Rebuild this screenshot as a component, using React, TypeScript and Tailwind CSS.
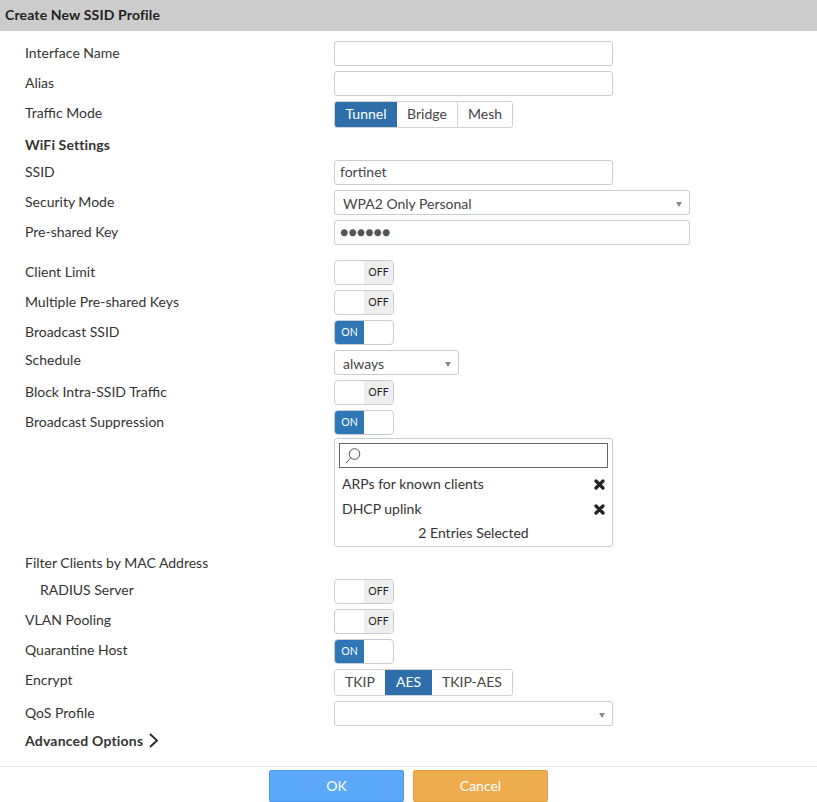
import React from "react";

const Label = ({ children, cls = "" }: { children: React.ReactNode; cls?: string }) => (
  <div className={`w-[334px] shrink-0 pl-[25px] text-[14px] text-[#333] ${cls}`}>{children}</div>
);

const Input = ({ value = "", w = "w-[279px]", cls = "text-[#444]" }: { value?: string; w?: string; cls?: string }) => (
  <div className={`${w} h-[25px] rounded-[3px] border border-[#c8ccd0] bg-white px-[5px] text-[14px] leading-[21px] ${cls}`}>{value}</div>
);

const Caret = () => (
  <svg width="6" height="5" viewBox="0 0 6 5" className="mt-[4px] shrink-0"><path d="M0 0H6L3 5Z" fill="#888" /></svg>
);

const Select = ({ value = "", w }: { value?: string; w: string }) => (
  <div className={`${w} flex h-[25px] items-center justify-between rounded-[3px] border border-[#c8ccd0] bg-white pl-[8px] pr-[7px] text-[14px] text-[#444]`}>
    <span className="pt-[2px]">{value}</span>
    <Caret />
  </div>
);

const Toggle = ({ on }: { on: boolean }) => (
  <div className="flex h-[25px] w-[60px] overflow-hidden rounded-[4px] border border-[#c8ccd0] bg-white text-[10.5px] leading-[23px]">
    {on ? (
      <>
        <div className="w-[29px] bg-[#2e76b6] text-center text-white">ON</div>
        <div className="flex-1" />
      </>
    ) : (
      <>
        <div className="flex-1" />
        <div className="w-[29px] bg-[#eeeeee] text-center text-[#222]">OFF</div>
      </>
    )}
  </div>
);

const Seg = ({ items, active }: { items: { t: string; w: string }[]; active: string }) => (
  <div className="flex h-[27px] overflow-hidden rounded-[3px] border border-[#d0d3d6] text-[14px] leading-[24px]">
    {items.map((it, i) => (
      <div
        key={it.t}
        className={`${it.w} text-center ${it.t === active ? "bg-[#2e6fab] text-white" : "bg-white text-[#444]"} ${i > 0 && it.t !== active && items[i - 1].t !== active ? "border-l border-[#d0d3d6]" : ""}`}
      >
        {it.t}
      </div>
    ))}
  </div>
);

const Row = ({ label, children, cls = "", labelCls = "leading-[24px]" }: { label: React.ReactNode; children?: React.ReactNode; cls?: string; labelCls?: string }) => (
  <div className={`flex ${cls}`}>
    <Label cls={labelCls}>{label}</Label>
    {children}
  </div>
);

const Cross = () => (
  <svg width="11" height="11" viewBox="0 0 11 11" className="mt-[2px]"><path d="M2 2L9 9M9 2L2 9" stroke="#222" strokeWidth="3.2" strokeLinecap="round" /></svg>
);

export default function App() {
  return (
    <div className="flex h-[802px] w-[817px] flex-col overflow-hidden bg-white font-['Lato','Carlito',sans-serif]">
      <div className="h-[31px] bg-[#cccccc] pl-[5px] text-[14px] font-bold leading-[30px] tracking-[0.15px] text-[#222]">Create New SSID Profile</div>
      <div className="flex flex-1 flex-col pt-[10px]">
        <Row label="Interface Name" cls="mb-[5px]"><Input /></Row>
        <Row label="Alias" cls="mb-[5px]"><Input /></Row>
        <Row label="Traffic Mode" cls="mb-[5px]">
          <Seg active="Tunnel" items={[{ t: "Tunnel", w: "w-[62px]" }, { t: "Bridge", w: "w-[60px]" }, { t: "Mesh", w: "w-[55px]" }]} />
        </Row>
        <div className="h-[27px] pl-[25px] text-[14px] font-bold leading-[24px] tracking-[0.13px] text-[#333]">WiFi Settings</div>
        <Row label="SSID" cls="mb-[5px]"><Input value="fortinet" /></Row>
        <Row label="Security Mode" cls="mb-[5px]"><Select value="WPA2 Only Personal" w="w-[356px]" /></Row>
        <Row label="Pre-shared Key" cls="mb-[15px]"><Input value="●●●●●●" w="w-[356px]" cls="text-[#555]" /></Row>
        <Row label="Client Limit" cls="mb-[5px]"><Toggle on={false} /></Row>
        <Row label="Multiple Pre-shared Keys" cls="mb-[5px]"><Toggle on={false} /></Row>
        <Row label="Broadcast SSID" cls="mb-[5px]"><Toggle on /></Row>
        <Row label="Schedule" cls="mb-[5px]" labelCls="leading-[20px]"><Select value="always" w="w-[125px]" /></Row>
        <Row label="Block Intra-SSID Traffic" cls="mb-[5px]"><Toggle on={false} /></Row>
        <Row label="Broadcast Suppression" cls="mb-[3px]"><Toggle on /></Row>
        <Row label="" cls="mb-[4px]">
          <div className="flex h-[109px] w-[279px] flex-col rounded-[3px] border border-[#c8ccd0] px-[4px] pt-[4px] text-[14px] text-[#333]">
            <div className="flex h-[25px] items-center border border-[#666] pl-[5px]">
              <svg width="16" height="16" viewBox="0 0 16 16" fill="none" stroke="#555" strokeWidth="1"><circle cx="9.5" cy="6" r="5.3" /><path d="M5.8 9.8L1 15" /></svg>
            </div>
            <div className="mt-[3px] flex h-[25px] items-center justify-between pl-[3px] pr-[3px]"><span>ARPs for known clients</span><Cross /></div>
            <div className="flex h-[25px] items-center justify-between pl-[3px] pr-[3px]"><span>DHCP uplink</span><Cross /></div>
            <div className="h-[24px] text-center leading-[24px]">2 Entries Selected</div>
          </div>
        </Row>
        <Row label="Filter Clients by MAC Address" cls="h-[28px]" />
        <Row label={<span className="pl-[15px]">RADIUS Server</span>} cls="mb-[5px]" labelCls="leading-[22px]"><Toggle on={false} /></Row>
        <Row label="VLAN Pooling" cls="mb-[5px]" labelCls="leading-[22px]"><Toggle on={false} /></Row>
        <Row label="Quarantine Host" cls="mb-[5px]" labelCls="leading-[22px]"><Toggle on /></Row>
        <Row label="Encrypt" cls="mb-[5px]" labelCls="leading-[22px]">
          <Seg active="AES" items={[{ t: "TKIP", w: "w-[50px]" }, { t: "AES", w: "w-[47px]" }, { t: "TKIP-AES", w: "w-[80px]" }]} />
        </Row>
        <Row label="QoS Profile" cls="mb-[3px]"><Select w="w-[279px]" /></Row>
        <div className="flex h-[23px] items-center pl-[25px] text-[14px] font-bold tracking-[0.2px] text-[#333]">
          Advanced Options
          <svg width="11" height="15" viewBox="0 0 11 15" fill="none" stroke="#222" strokeWidth="1.8" className="ml-[5px]"><path d="M2 1L9 7.5L2 14" /></svg>
        </div>
      </div>
      <div className="flex h-[36px] justify-center gap-[9px] border-t border-[#e8e8e8] pt-[3px]">
        <div className="h-[32px] w-[135px] rounded-[2px] border border-[#4a9aef] bg-[#5ca9f9] text-center text-[14px] leading-[30px] text-white">OK</div>
        <div className="h-[32px] w-[135px] rounded-[2px] border border-[#e5a040] bg-[#efac4e] text-center text-[14px] leading-[30px] text-white">Cancel</div>
      </div>
    </div>
  );
}
